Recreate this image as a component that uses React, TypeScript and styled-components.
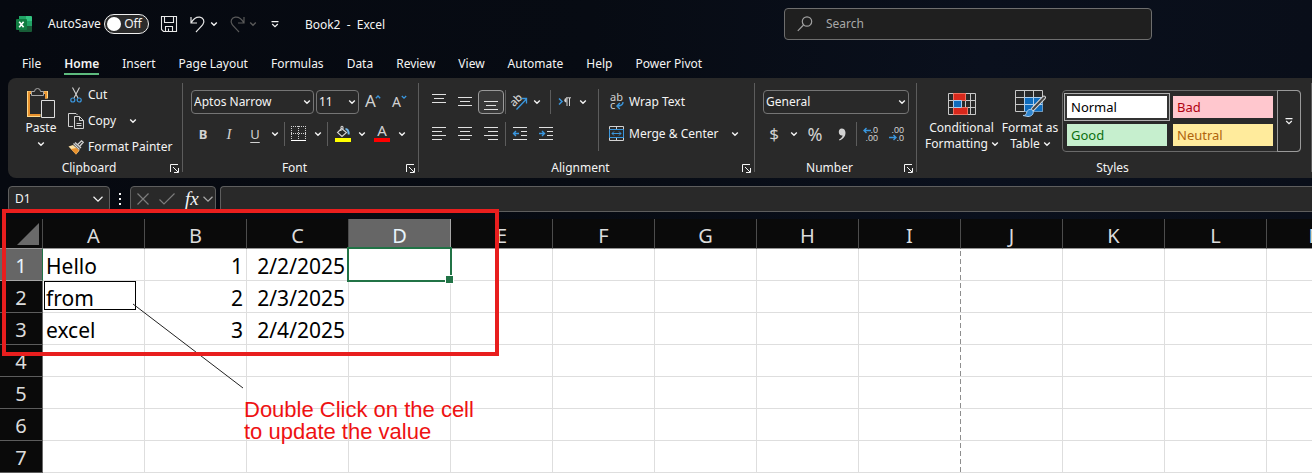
import React from "react";
import styled, { createGlobalStyle, css } from "styled-components";

const ui = `"Noto Sans", "Open Sans", sans-serif`;
const ink = "#f4f4f4";
const stroke = "#d2d2d2";
const blue = "#3a96dd";
const ribbonBg = "#292929";

const GlobalStyle = createGlobalStyle`
  * { box-sizing: border-box; }
  html, body, #root { margin: 0; height: 100%; }
  body { overflow: hidden; background: #060910; font: 12px/16px ${ui}; color: ${ink}; }
  button, input, select { font: inherit; color: inherit; background: none; border: 0; margin: 0; padding: 0; outline: none; }
  svg { display: block; flex: none; overflow: visible; }
`;

const Window = styled.div`
  display: flex;
  flex-direction: column;
  height: 100%;
  overflow: hidden;
  background: linear-gradient(90deg, #060910 0%, #070b13 45%, #0a101d 75%, #090e19 100%);
`;

/* ---------- Title bar ---------- */

const TitleBar = styled.header`
  display: flex;
  flex: none;
  align-items: center;
  height: 48px;
  padding-left: 16px;
  white-space: pre;
`;

const AutoSave = styled.label`
  display: flex;
  align-items: center;
  gap: 3px;
  margin: 0 12px 0 16px;
`;

const Toggle = styled.span`
  position: relative;
  display: flex;
  align-items: center;
  justify-content: flex-end;
  width: 45px;
  height: 20px;
  padding-right: 6px;
  border: 1px solid #f0f0f0;
  border-radius: 10px;
  background: #2b2b2b;
`;

const Switch = styled.input`
  && {
    position: absolute;
    left: 2px;
    top: 2px;
    width: 14px;
    height: 14px;
    appearance: none;
    border-radius: 50%;
    background: #fff;
  }
`;

const BarButton = styled.button<{ $w: number; $ml?: number }>`
  display: flex;
  align-items: center;
  justify-content: center;
  width: ${(p) => p.$w}px;
  height: 24px;
  margin-left: ${(p) => p.$ml ?? 0}px;
`;

const DocTitle = styled.h1`
  margin: 0 16px 0 26px;
  padding-top: 2px;
  font: inherit;
`;

const SearchBox = styled.label`
  display: flex;
  align-items: center;
  flex: 0 1 368px;
  height: 32px;
  margin: 0 160px 0 auto;
  padding-left: 12px;
  gap: 13px;
  border: 1px solid #6e6e6e;
  border-radius: 4px;
  background: #1f1f1f;
`;

const SearchInput = styled.input`
  flex: 1;
  min-width: 0;
  &::placeholder { color: #a8a8a8; opacity: 1; }
`;

/* ---------- Tabs ---------- */

const Tabs = styled.nav`
  display: flex;
  flex: none;
  height: 30px;
  padding: 6px 0 0 22px;
  gap: 23px;
`;

const Tab = styled.a<{ $active?: boolean }>`
  height: 21px;
  padding-top: 2px;
  color: ${ink};
  text-decoration: none;
  white-space: nowrap;
  ${(p) => p.$active && css`
    font-weight: 600;
    border-bottom: 2px solid #5dbb7e;
  `}
`;

/* ---------- Ribbon ---------- */

const Ribbon = styled.section`
  display: flex;
  flex: none;
  height: 100px;
  margin-left: 8px;
  border-radius: 8px 0 0 8px;
  background: ${ribbonBg};
  overflow: hidden;
`;

const Group = styled.div<{ $w: number }>`
  display: flex;
  flex-direction: column;
  flex: none;
  width: ${(p) => p.$w}px;
  padding: 4px 0 2px;
`;

const GroupBody = styled.div<{ $pad: number }>`
  display: flex;
  height: 78px;
  padding-left: ${(p) => p.$pad}px;
`;

const GroupFooter = styled.div`
  display: flex;
  align-items: center;
  height: 16px;
  padding-right: 3px;
`;

const GroupLabel = styled.span`
  flex: 1;
  text-align: center;
`;

const Divider = styled.i`
  flex: none;
  width: 1px;
  margin: 5px 0 6px;
  background: #5c5c5c;
`;

const Rows = styled.div`
  display: flex;
  flex-direction: column;
  gap: 8px;
  padding-top: 8px;
`;

const Stack = styled.div`
  display: flex;
  flex-direction: column;
  padding-left: 7px;
`;

const Row = styled.div<{ $indent?: number }>`
  display: flex;
  align-items: center;
  height: 24px;
  padding-left: ${(p) => p.$indent ?? 0}px;
`;

const Sep = styled.i<{ $l?: number; $r?: number; $tall?: boolean }>`
  flex: none;
  width: 1px;
  height: ${(p) => (p.$tall ? 62 : 24)}px;
  margin: ${(p) => (p.$tall ? 7 : 0)}px ${(p) => p.$r ?? 2}px 0 ${(p) => p.$l ?? 2}px;
  background: #5c5c5c;
`;

const Tool = styled.button<{ $w?: number; $on?: boolean }>`
  display: flex;
  flex: none;
  align-items: center;
  justify-content: center;
  width: ${(p) => p.$w ?? 26}px;
  height: 24px;
  color: ${stroke};
  ${(p) => p.$on && css`
    border: 1px solid #9a9a9a;
    border-radius: 4px;
    background: #383838;
  `}
`;

const Glyph = styled.span<{ $size?: number; $bold?: boolean; $italic?: boolean; $line?: boolean; $serif?: boolean }>`
  font-size: ${(p) => p.$size ?? 13}px;
  font-family: ${(p) => (p.$serif ? `"Liberation Serif", serif` : ui)};
  font-weight: ${(p) => (p.$bold ? 700 : 400)};
  font-style: ${(p) => (p.$italic ? "italic" : "normal")};
  text-decoration: ${(p) => (p.$line ? "underline" : "none")};
  text-underline-offset: 3px;
`;

const TextTool = styled.button<{ $h?: number }>`
  display: flex;
  align-items: center;
  height: ${(p) => p.$h ?? 26}px;
  gap: 4px;
  white-space: nowrap;
`;

const IconSlot = styled.span<{ $w?: number }>`
  display: flex;
  justify-content: center;
  width: ${(p) => p.$w ?? 16}px;
`;

const BigTool = styled.button<{ $w: number }>`
  display: flex;
  flex: none;
  flex-direction: column;
  align-items: center;
  width: ${(p) => p.$w}px;
  padding-top: 5px;
  white-space: nowrap;
`;

const BigIcon = styled.span`
  display: flex;
  align-items: center;
  height: 33px;
`;

const BigLine = styled.span`
  display: flex;
  align-items: center;
  gap: 4px;
  height: 16px;
`;

const Combo = styled.label<{ $w: number }>`
  position: relative;
  display: flex;
  align-items: center;
  width: ${(p) => p.$w}px;
  height: 24px;
  border: 1px solid #757575;
  border-radius: 4px;
  & + & { margin-left: 2px; }
`;

const Select = styled.select`
  width: 100%;
  height: 100%;
  && { padding-left: 2px; }
  appearance: none;
`;

const ComboArrow = styled.span`
  position: absolute;
  right: 3px;
  pointer-events: none;
`;

const Gallery = styled.div`
  display: flex;
  height: 62px;
  margin: 8px 0 0 2px;
  border: 1px solid #6a6a6a;
  border-radius: 4px;
`;

const Swatches = styled.div`
  display: grid;
  grid-template-columns: 100px 100px;
  grid-auto-rows: 22px;
  gap: 6px;
  padding: 5px 4px;
`;

const Swatch = styled.button<{ $bg: string; $fg: string; $on?: boolean }>`
  && {
    padding: 0 0 1px 4px;
    text-align: left;
    font-size: 13px;
    background: ${(p) => p.$bg};
    color: ${(p) => p.$fg};
  }
  ${(p) => p.$on && css`
    box-shadow: 0 0 0 2px #333, 0 0 0 3px #b0b0b0;
  `}
`;

const GalleryMore = styled.button`
  && {
    display: flex;
    align-items: center;
    justify-content: center;
    width: 24px;
    margin: -1px -1px -1px 0;
    border: 1px solid #9a9a9a;
    border-radius: 0 4px 4px 0;
  }
`;

/* ---------- Formula bar ---------- */

const FormulaBar = styled.div`
  display: flex;
  flex: none;
  height: 26px;
  margin: 8px 0 7px 8px;
`;

const Field = styled.div<{ $w?: number }>`
  display: flex;
  align-items: center;
  flex: ${(p) => (p.$w ? `0 0 ${p.$w}px` : "1 1 0")};
  min-width: 0;
  padding: 0 6px;
  border: 1px solid #5e5e5e;
  border-right-width: ${(p) => (p.$w ? 1 : 0)}px;
  border-radius: ${(p) => (p.$w ? "4px" : "4px 0 0 4px")};
  background: ${ribbonBg};
  & + & { margin-left: 4px; }
`;

const FieldInput = styled.input`
  flex: 1 1 0;
  width: 0;
`;

const Grip = styled.span`
  display: flex;
  justify-content: center;
  align-items: center;
  width: 20px;
`;

/* ---------- Sheet ---------- */

const Sheet = styled.main`
  position: relative;
  flex: 1 1 0;
  min-height: 0;
  overflow: hidden;
  background: #fff;
`;

const Grid = styled.table`
  width: 1369px;
  table-layout: fixed;
  border-collapse: separate;
  border-spacing: 0;
  font-size: 20px;
  line-height: 24px;
  color: #000;
`;

const ColHead = styled.th<{ $on?: boolean; $w?: number }>`
  width: ${(p) => p.$w ?? 102}px;
  height: 30px;
  padding: 5px 0 0;
  font-weight: 400;
  color: ${(p) => (p.$on ? "#e8f4fb" : "#dcdcdc")};
  background: ${(p) => (p.$on ? "#666" : "#0a0a0a")};
  border-right: 1px solid ${(p) => (p.$on ? "#a6a6a6" : "#4c4c4c")};
  border-bottom: 1px solid #969696;
`;

const CornerHead = styled(ColHead)`
  padding: 3px 0 0;
`;

const Corner = styled.div`
  width: 22px;
  height: 22px;
  margin: 0 3px 2px auto;
  background: #6a6a6a;
  clip-path: polygon(100% 0, 100% 100%, 0 100%);
`;

const RowHead = styled.th<{ $on?: boolean }>`
  height: 32px;
  padding: 2px 0 0;
  font-weight: 400;
  color: ${(p) => (p.$on ? "#e8f4fb" : "#dcdcdc")};
  background: ${(p) => (p.$on ? "#666" : "#0a0a0a")};
  border-right: 1px solid ${(p) => (p.$on ? "#217346" : "#6a6a6a")};
  border-bottom: 1px solid ${(p) => (p.$on ? "#a6a6a6" : "#5c5c5c")};
`;

const Cell = styled.td<{ $num?: boolean; $break?: boolean }>`
  position: relative;
  padding: 2px 3px 0;
  font-size: 21px;
  text-align: ${(p) => (p.$num ? "right" : "left")};
  border-bottom: 1px solid #dedede;
  ${(p) => p.$break
    ? css`background: repeating-linear-gradient(#fff 0 2px, #8e8e8e 2px 7px, #fff 7px 8px) right / 1px 100% no-repeat;`
    : css`border-right: 1px solid #dedede;`}
`;

const Selection = styled.div`
  position: absolute;
  inset: -2px;
  z-index: 1;
  border: 2px solid #217346;
  &::after {
    content: "";
    position: absolute;
    right: -4px;
    bottom: -4px;
    width: 7px;
    height: 7px;
    border: 1px solid #fff;
    background: #217346;
  }
`;

const CellFrame = styled.div`
  position: absolute;
  inset: 0 auto auto 1px;
  width: 92px;
  height: 29px;
  border: 1px solid #000;
`;

const Frame = styled.div`
  position: absolute;
  z-index: 2;
  left: 2px;
  top: 209px;
  width: 497px;
  height: 147px;
  border: 4px solid #e81e1e;
`;

const Pointer = styled.svg`
  position: absolute;
  z-index: 2;
  left: 133px;
  top: 85px;
`;

const Note = styled.p`
  position: absolute;
  left: 244px;
  top: 180px;
  margin: 0;
  font: 22px/22px "Liberation Sans", Arial, sans-serif;
  color: #ee1212;
`;

/* ---------- Icons ---------- */

const Chevron = ({ c = ink, s = 6 }: { c?: string; s?: number }) => (
  <svg width={s} height={s > 7 ? 6 : 4} viewBox={s > 7 ? "0 0 10 6" : "0 0 6 4"} fill="none" stroke={c} strokeWidth={s > 7 ? 1.2 : 1.4}>
    <path d={s > 7 ? "M.5.8 5 5.200 9.500.8" : "M.2.500 3 3.200 5.800.500"} />
  </svg>
);

const Launcher = () => (
  <BarButton $w={9} aria-label="More options">
    <svg width="9" height="9" viewBox="0 0 9 9" fill="none" stroke={ink}>
      <path d="M.5 8V.5H8M3 3l5 5M8.5 4v4.5H4" />
    </svg>
  </BarButton>
);

const ExcelLogo = () => (
  <svg width="16" height="16" viewBox="0 0 16 16">
    <path fill="#21a366" d="M3 0h7v5H3z" />
    <path fill="#33c481" d="M10 0h5a1 1 0 0 1 1 1v4h-6z" />
    <path fill="#107c41" d="M3 5h7v6H3z" />
    <path fill="#21a366" d="M10 5h6v5h-6z" />
    <path fill="#185c37" d="M3 10h13v5a1 1 0 0 1-1 1H4a1 1 0 0 1-1-1z" />
    <rect y="3" width="11" height="11" rx="1" fill="#107c41" />
    <path d="m3.2 5.7 4.4 5.6M7.6 5.7l-4.4 5.6" stroke="#fff" strokeWidth="1.6" />
  </svg>
);

const SaveIcon = () => (
  <svg width="16" height="16" viewBox="0 0 16 16" fill="none" stroke="#e8e8e8" strokeWidth="1.1">
    <path d="M.5.5h15v15h-13l-2-2zM3.5.5v6h9v-6M4.5 15.500v-5h7v5M7.500 12.500v3" />
  </svg>
);

const UndoIcon = ({ flip, c }: { flip?: boolean; c: string }) => (
  <svg width="15" height="17" viewBox="0 0 15 17" fill="none" stroke={c} strokeWidth="1.200">
    <path
      transform={flip ? "matrix(-1 0 0 1 15 0)" : undefined}
      d="M1 1v6h6M1.200 6.800C3.500 2.800 6.500.8 9.800 1.200c3.600.5 5.200 4.200 3.200 7C12 9.800 9 12.500 6 16"
    />
  </svg>
);

const MoreIcon = () => (
  <svg width="8" height="7" viewBox="0 0 8 7" fill="none" stroke={ink} strokeWidth="1.200">
    <path d="M.5.6h7M1.200 3 4 5.600 6.800 3" />
  </svg>
);

const SearchIcon = () => (
  <svg width="16" height="16" viewBox="0 0 16 16" fill="none" stroke="#a0a0a0" strokeWidth="1.200">
    <circle cx="10" cy="5.500" r="4.700" />
    <path d="M6.500 9 .8 14.800" />
  </svg>
);

const PasteIcon = () => (
  <svg width="28" height="32" viewBox="0 0 28 32" fill="none">
    <path d="M5 4.500H1.500v23h12M15 4.500h4.500v6" stroke="#ffd98a" strokeWidth="3" />
    <path d="M5 4.500H2v22.500h11M15 4.500h4v6" stroke="#e8912d" strokeWidth="2" />
    <path d="M4.500 7.500v-4h3a3 3 0 0 1 6 0h3v4z" fill={ribbonBg} stroke="#a8a8a8" />
    <path d="M14.500 12.500h13v17h-13z" fill={ribbonBg} stroke="#dedede" />
  </svg>
);

const CutIcon = () => (
  <svg width="12" height="16" viewBox="0 0 12 16" fill="none">
    <path d="M2.500.5 8 11M9.500.5 4 11" stroke={stroke} strokeWidth="1.100" />
    <circle cx="2.800" cy="13" r="2" stroke={blue} strokeWidth="1.200" />
    <circle cx="9.200" cy="13" r="2" stroke={blue} strokeWidth="1.200" />
  </svg>
);

const CopyIcon = () => (
  <svg width="16" height="16" viewBox="0 0 16 16" fill="none" stroke={stroke}>
    <path d="M5 13.500H.5V.5h7.500l1.500 1.500M6.500 3.500h5l4 4v8h-9zM11.500 3.500v4h4M8.500 10.500h5M8.500 12.500h5" />
  </svg>
);

const PainterIcon = () => (
  <svg width="16" height="15" viewBox="0 0 16 15" fill="none">
    <path d="M.5 6.500 5 5l6.500 5.500L8 14.500z" fill="#ffe0a0" />
    <path d="m3 9 5.500-1L11 10l-3 4.500z" fill="#e8912d" />
    <path d="m5.500 3.500 6 6M7 2.500l6 5.500M9.800 4.500 13.500.8l1.700 1.500-3.500 3.900" stroke={stroke} strokeWidth="1.300" />
  </svg>
);

const SizeIcon = ({ up }: { up?: boolean }) => (
  <svg width="16" height="16" viewBox="0 0 16 16" fill="none">
    <text x="0" y="13" fontSize={up ? 17 : 14} fontFamily="Noto Sans" fill={stroke}>A</text>
    <path d={up ? "M10.800 4.200 13 2l2.200 2.200" : "M9.800 2 12 4.200 14.200 2"} stroke={blue} strokeWidth="1.300" />
  </svg>
);

const BordersIcon = () => (
  <svg width="16" height="16" viewBox="0 0 16 16" fill="none" stroke={stroke} shapeRendering="crispEdges">
    <path strokeDasharray="1 1" d="M0 .5h15M0 7.500h15M.5 0v14M7.500 0v14M14.500 0v14" />
    <path d="M0 14.500h15" stroke="#fff" />
  </svg>
);

const FillIcon = () => (
  <svg width="16" height="16" viewBox="0 0 16 16" fill="none">
    <path d="M6.500 2.500 11.500 6.500 7 10.500 2.500 6.500z M6 5V1q1-1.200 2 0V4" stroke={stroke} strokeWidth="1.100" />
    <path d="M10.500 3q3.200 0 3.200 5.500" stroke="#6fb4e8" strokeWidth="2" />
    <path d="M0 12h16v4H0z" fill="#ff0" />
  </svg>
);

const FontColorIcon = () => (
  <svg width="16" height="16" viewBox="0 0 16 16">
    <text x="8" y="10" textAnchor="middle" fontSize="15" fontFamily="Noto Sans" fill={stroke}>A</text>
    <path d="M0 12h16v4H0z" fill="red" />
  </svg>
);

const Lines = ({ d }: { d: string }) => (
  <svg width="16" height="16" viewBox="0 0 16 16" stroke="#e0e0e0" shapeRendering="crispEdges"><path d={d} /></svg>
);

const IndentIcon = ({ right }: { right?: boolean }) => (
  <svg width="16" height="16" viewBox="0 0 16 16" fill="none">
    <path d="M1 1.500h14M9 5.500h6M9 9.500h6M1 13.500h14" stroke="#e0e0e0" shapeRendering="crispEdges" />
    <path d={right ? "M1 7.500h5.500M4 5l2.500 2.500L4 10" : "M1.500 7.500H7M4 5 1.500 7.500 4 10"} stroke={blue} strokeWidth="1.400" />
  </svg>
);

const OrientIcon = () => (
  <svg width="16" height="16" viewBox="0 0 16 16" fill="none">
    <text x="-1" y="10" transform="rotate(-45 5 7)" fontSize="11" fontWeight="500" fontFamily="Noto Sans" fill={stroke}>ab</text>
    <path d="M5.500 15.500 15.500 5M10.500 4.500H15.500V9.500" stroke={blue} strokeWidth="1.300" />
  </svg>
);

const DirectionIcon = () => (
  <svg width="14" height="10" viewBox="0 0 14 10" fill="none">
    <path d="m1 1.500 3 3-3 3" stroke={blue} strokeWidth="1.500" />
    <path d="M8.500 1a2.200 2.200 0 0 0 0 4.400z" fill={stroke} />
    <path d="M13 .8H8M9 1v8M11.500 1v8" stroke={stroke} />
  </svg>
);

const WrapIcon = () => (
  <svg width="14" height="16" viewBox="0 0 14 16" fill="none">
    <text x="0" y="7" fontSize="11" fontFamily="Noto Sans" fill={stroke}>ab</text>
    <text x="0" y="15" fontSize="11" fontFamily="Noto Sans" fill={stroke}>c</text>
    <path d="M13 8q0 4-6 4M9.800 9 7 12l2.800 3" stroke={blue} strokeWidth="1.400" />
  </svg>
);

const MergeIcon = () => (
  <svg width="16" height="16" viewBox="0 0 16 16" fill="none" stroke={stroke}>
    <path d="M.5.5h14v14H.5zM7.500.5v3M7.500 12v3" />
    <path d="M.5 3.500h14v8H.5z" fill={ribbonBg} stroke={blue} />
    <path d="M3 7.500h9M5 5.500l-2 2 2 2M10 5.500l2 2-2 2" stroke={blue} />
  </svg>
);

const CommaIcon = () => (
  <svg width="8" height="13" viewBox="0 0 8 13" fill={stroke}>
    <path d="M3.600.5C5.800.5 7.500 2 7.500 4.800 7.500 8.500 5 11.500 1.500 12.500L1 11.500C3 10.700 4.300 9.300 4.600 7.500 2.500 8 .8 6.400.8 4 .8 2 2 .5 3.600.5z" />
  </svg>
);

const DecimalIcon = ({ less }: { less?: boolean }) => (
  <svg width="16" height="16" viewBox="0 0 16 16" fill="none">
    <text x="15" y="7" textAnchor="end" fontSize="9" fontFamily="Liberation Sans" fill={stroke}>{less ? ".00" : ".0"}</text>
    <text x="15" y="15" textAnchor="end" fontSize="9" fontFamily="Liberation Sans" fill={stroke}>{less ? ".0" : ".00"}</text>
    <path d={less ? "M0 11.500h7M4.500 9 7 11.500 4.500 14" : "M.8 4.500H8M3.500 2 1 4.500 3.500 7"} stroke={blue} strokeWidth="1.400" />
  </svg>
);

const CondIcon = () => (
  <svg width="28" height="22" viewBox="0 0 28 22" fill="none">
    <path d="M.5.5h27v21H.5zM.5 7.500h27M.5 14.500h27M5.500.5v21M13.500.5v21M17.500.5v21M22.500.5v21" stroke="#c8c8c8" />
    <path d="M5.500.5h12v7h-12zM5.500 14.500h14v7h-14z" fill="#d8281c" stroke="#f0705f" />
    <path d="M5.500 7.500h8v7h-8z" fill="#0f6cbd" stroke="#a9cdee" />
  </svg>
);

const TableIcon = () => (
  <svg width="31" height="27" viewBox="0 0 31 27" fill="none">
    <path d="M.5.5h27v21H.5zM.5 7.500h27M.5 14.500h27M9.500.5v21M18.500.5v21" stroke="#c8c8c8" />
    <path d="M9.500 7.500h18v14h-18z" fill="#0f6cbd" />
    <path d="M9.500 14.500h18M18.500 7.500v14M9.500 7.500v14M9.500 7.500h18" stroke="#a9cdee" />
    <path d="M18 19 29 7.500" stroke="#d8d8d8" strokeWidth="4" strokeLinecap="round" />
    <path d="M18 19 29 7.500" stroke="#444" strokeWidth="2" strokeLinecap="round" />
    <path d="M8 25.500c3 0 3-1 4-4 1-2.500 5-3 6-.5 1 3-1.500 5.500-5 5.500z" fill="#2f86cf" stroke="#a9cdee" />
  </svg>
);

/* ---------- Page ---------- */

const tabs = ["File", "Home", "Insert", "Page Layout", "Formulas", "Data", "Review", "View", "Automate", "Help", "Power Pivot"];
const columns = "ABCDEFGHIJKLM".split("");
const data: Record<number, string[]> = {
  1: ["Hello", "1", "2/2/2025"],
  2: ["from", "2", "2/3/2025"],
  3: ["excel", "3", "2/4/2025"],
};

const ComboBox = ({ w, label, value }: { w: number; label: string; value: string }) => (
  <Combo $w={w}>
    <Select aria-label={label} defaultValue={value}>
      <option>{value}</option>
    </Select>
    <ComboArrow><Chevron /></ComboArrow>
  </Combo>
);

const Drop = ({ w = 14 }: { w?: number }) => (
  <Tool $w={w} aria-label="More"><Chevron /></Tool>
);

export default function App() {
  return (
    <Window>
      <GlobalStyle />
      <TitleBar>
        <ExcelLogo />
        <AutoSave>
          AutoSave
          <Toggle><Switch type="checkbox" role="switch" />Off</Toggle>
        </AutoSave>
        <BarButton $w={16} aria-label="Save"><SaveIcon /></BarButton>
        <BarButton $w={15} $ml={13} aria-label="Undo"><UndoIcon c="#e8e8e8" /></BarButton>
        <BarButton $w={6} $ml={6} aria-label="Undo history"><Chevron /></BarButton>
        <BarButton $w={15} $ml={13} aria-label="Redo"><UndoIcon flip c="#5a5a5a" /></BarButton>
        <BarButton $w={6} $ml={5} aria-label="Redo history"><Chevron c="#5a5a5a" /></BarButton>
        <BarButton $w={8} $ml={15} aria-label="Customize toolbar"><MoreIcon /></BarButton>
        <DocTitle>{"Book2  -  Excel"}</DocTitle>
        <SearchBox>
          <SearchIcon />
          <SearchInput placeholder="Search" aria-label="Search" />
        </SearchBox>
      </TitleBar>

      <Tabs>
        {tabs.map((t) => (
          <Tab key={t} href="#" $active={t === "Home"}>{t}</Tab>
        ))}
      </Tabs>

      <Ribbon>
        <Group $w={174}>
          <GroupBody $pad={13}>
            <BigTool $w={40}>
              <BigIcon><PasteIcon /></BigIcon>
              <BigLine>Paste</BigLine>
              <BigLine><Chevron /></BigLine>
            </BigTool>
            <Stack>
              <TextTool><IconSlot><CutIcon /></IconSlot>Cut</TextTool>
              <TextTool><IconSlot><CopyIcon /></IconSlot>Copy<IconSlot $w={26}><Chevron /></IconSlot></TextTool>
              <TextTool><IconSlot><PainterIcon /></IconSlot>Format Painter</TextTool>
            </Stack>
          </GroupBody>
          <GroupFooter><GroupLabel>Clipboard</GroupLabel><Launcher /></GroupFooter>
        </Group>
        <Divider />
        <Group $w={235}>
          <GroupBody $pad={7}>
            <Rows>
              <Row $indent={1}>
                <ComboBox w={123} label="Font" value="Aptos Narrow" />
                <ComboBox w={43} label="Font size" value="11" />
                <Tool $w={28} aria-label="Increase font size"><SizeIcon up /></Tool>
                <Tool aria-label="Decrease font size"><SizeIcon /></Tool>
              </Row>
              <Row>
                <Tool aria-label="Bold"><Glyph $bold>B</Glyph></Tool>
                <Tool aria-label="Italic"><Glyph $size={15} $italic $serif>I</Glyph></Tool>
                <Tool aria-label="Underline"><Glyph $line>U</Glyph></Tool>
                <Drop />
                <Sep />
                <Tool $w={24} aria-label="Borders"><BordersIcon /></Tool>
                <Drop />
                <Sep />
                <Tool aria-label="Fill color"><FillIcon /></Tool>
                <Drop w={12} />
                <Tool $w={28} aria-label="Font color"><FontColorIcon /></Tool>
                <Drop w={12} />
              </Row>
            </Rows>
          </GroupBody>
          <GroupFooter><GroupLabel>Font</GroupLabel><Launcher /></GroupFooter>
        </Group>
        <Divider />
        <Group $w={335}>
          <GroupBody $pad={7}>
            <Rows>
              <Row>
                <Tool aria-label="Top align"><Lines d="M1 .5h14M3 4.500h10M1 8.500h14" /></Tool>
                <Tool aria-label="Middle align"><Lines d="M1 3.500h14M3 7.500h10M1 11.500h14" /></Tool>
                <Tool $on aria-label="Bottom align"><Lines d="M1 7.500h14M3 11.500h10M1 15.500h14" /></Tool>
                <Sep $l={1} $r={1} />
                <Tool $w={24} aria-label="Orientation"><OrientIcon /></Tool>
                <Drop w={12} />
                <Sep $l={7} $r={2} />
                <Tool $w={24} aria-label="Text direction"><DirectionIcon /></Tool>
                <Drop w={12} />
              </Row>
              <Row>
                <Tool aria-label="Align left"><Lines d="M1 1.500h14M1 5.500h10M1 9.500h14M1 13.500h10" /></Tool>
                <Tool aria-label="Center"><Lines d="M1 1.500h14M3 5.500h10M1 9.500h14M3 13.500h10" /></Tool>
                <Tool aria-label="Align right"><Lines d="M1 1.500h14M5 5.500h10M1 9.500h14M5 13.500h10" /></Tool>
                <Sep $l={1} $r={1} />
                <Tool aria-label="Decrease indent"><IndentIcon /></Tool>
                <Tool aria-label="Increase indent"><IndentIcon right /></Tool>
              </Row>
            </Rows>
            <Sep $tall $l={9} $r={10} />
            <Rows>
              <TextTool $h={24}><IconSlot><WrapIcon /></IconSlot>Wrap Text</TextTool>
              <Row>
                <TextTool $h={24}><IconSlot><MergeIcon /></IconSlot>Merge &amp; Center</TextTool>
                <Drop w={32} />
              </Row>
            </Rows>
          </GroupBody>
          <GroupFooter><GroupLabel>Alignment</GroupLabel><Launcher /></GroupFooter>
        </Group>
        <Divider />
        <Group $w={161}>
          <GroupBody $pad={6}>
            <Rows>
              <Row $indent={2}><ComboBox w={146} label="Number format" value="General" /></Row>
              <Row>
                <Tool aria-label="Currency"><Glyph $size={17}>$</Glyph></Tool>
                <Drop />
                <Tool $w={28} aria-label="Percent"><Glyph $size={18}>%</Glyph></Tool>
                <Tool aria-label="Comma style"><CommaIcon /></Tool>
                <Sep $l={1} $r={1} />
                <Tool aria-label="Increase decimal"><DecimalIcon /></Tool>
                <Tool aria-label="Decrease decimal"><DecimalIcon less /></Tool>
              </Row>
            </Rows>
          </GroupBody>
          <GroupFooter><GroupLabel>Number</GroupLabel><Launcher /></GroupFooter>
        </Group>
        <Divider />
        <Group $w={394}>
          <GroupBody $pad={6}>
            <BigTool $w={77}>
              <BigIcon><CondIcon /></BigIcon>
              <BigLine>Conditional</BigLine>
              <BigLine>Formatting <Chevron /></BigLine>
            </BigTool>
            <BigTool $w={60}>
              <BigIcon><TableIcon /></BigIcon>
              <BigLine>Format as</BigLine>
              <BigLine>Table <Chevron /></BigLine>
            </BigTool>
            <Gallery>
              <Swatches>
                <Swatch $bg="#fff" $fg="#000" $on>Normal</Swatch>
                <Swatch $bg="#ffc7ce" $fg="#b00010">Bad</Swatch>
                <Swatch $bg="#c6efce" $fg="#0b7010">Good</Swatch>
                <Swatch $bg="#ffeb9c" $fg="#b0640c">Neutral</Swatch>
              </Swatches>
              <GalleryMore aria-label="More styles"><MoreIcon /></GalleryMore>
            </Gallery>
          </GroupBody>
          <GroupFooter><GroupLabel>Styles</GroupLabel></GroupFooter>
        </Group>
        <Divider />
      </Ribbon>

      <FormulaBar>
        <Field $w={102}>
          <FieldInput aria-label="Name box" defaultValue="D1" />
          <Chevron s={10} />
        </Field>
        <Grip>
          <svg width="2" height="12" viewBox="0 0 2 12" fill={ink}><path d="M0 0h2v2H0zM0 5h2v2H0zM0 10h2v2H0z" /></svg>
        </Grip>
        <Field $w={86}>
          <BarButton $w={12} aria-label="Cancel">
            <svg width="12" height="12" viewBox="0 0 12 12" stroke="#7c7c7c" strokeWidth="1.200"><path d="m.5.5 11 11M11.500.5l-11 11" /></svg>
          </BarButton>
          <BarButton $w={16} $ml={10} aria-label="Enter">
            <svg width="16" height="12" viewBox="0 0 16 12" fill="none" stroke="#7c7c7c" strokeWidth="1.200"><path d="m.5 6.500 4.500 4.500L15.500.5" /></svg>
          </BarButton>
          <BarButton $w={14} $ml={10} aria-label="Insert function"><Glyph $serif $italic $size={19}>fx</Glyph></BarButton>
          <BarButton $w={10} $ml={4} aria-label="Functions"><Chevron s={10} c="#a8a8a8" /></BarButton>
        </Field>
        <Field><FieldInput aria-label="Formula" /></Field>
      </FormulaBar>

      <Sheet>
        <Grid>
          <thead>
            <tr>
              <CornerHead $w={43}><Corner /></CornerHead>
              {columns.map((c) => <ColHead key={c} $on={c === "D"}>{c}</ColHead>)}
            </tr>
          </thead>
          <tbody>
            {[1, 2, 3, 4, 5, 6, 7].map((r) => (
              <tr key={r}>
                <RowHead $on={r === 1}>{r}</RowHead>
                {columns.map((c, i) => (
                  <Cell key={c} $num={i > 0} $break={c === "I"}>
                    {data[r]?.[i]}
                    {c === "D" && r === 1 && <Selection />}
                    {c === "A" && r === 2 && <CellFrame />}
                  </Cell>
                ))}
              </tr>
            ))}
          </tbody>
        </Grid>
        <Pointer width="111" height="85" viewBox="0 0 111 85" stroke="#222"><path d="M0 0 110 84" /></Pointer>
        <Note>Double Click on the cell<br />to update the value</Note>
      </Sheet>
      <Frame />
    </Window>
  );
}
